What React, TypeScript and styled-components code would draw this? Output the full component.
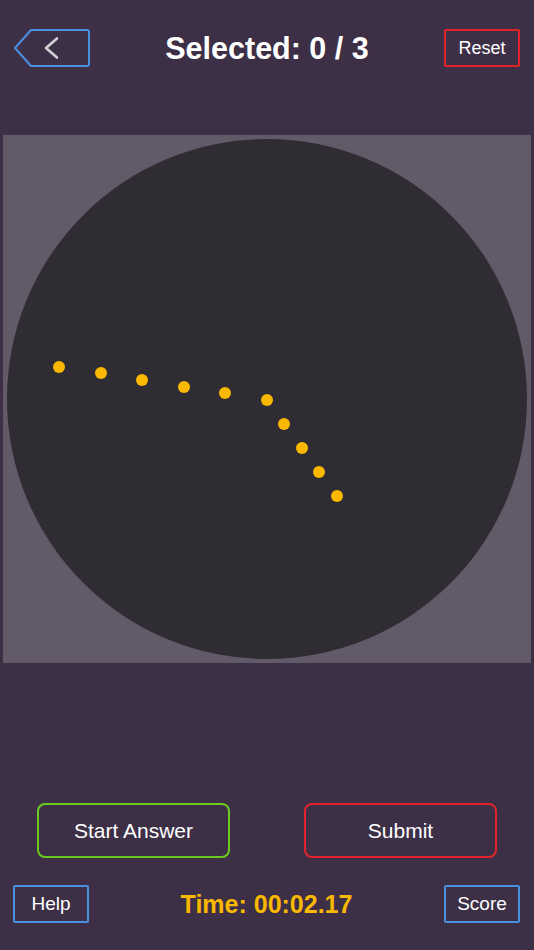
import styled, { createGlobalStyle } from "styled-components";

const GlobalStyle = createGlobalStyle`
  html, body {
    margin: 0;
    padding: 0;
    background: #3d3046;
  }
  body {
    font-family: "Liberation Sans", Arial, sans-serif;
    overflow: hidden;
  }
  * {
    box-sizing: border-box;
  }
`;

type Dot = { x: number; y: number };

// centres of the dots, in board coordinates
const dots: Dot[] = [
  { x: 56, y: 231.5 },
  { x: 97.7, y: 238.3 },
  { x: 139.3, y: 245 },
  { x: 180.7, y: 251.7 },
  { x: 222.3, y: 258 },
  { x: 263.7, y: 264.7 },
  { x: 281.3, y: 288.7 },
  { x: 298.7, y: 312.7 },
  { x: 316.3, y: 336.7 },
  { x: 333.7, y: 361 },
];

function BackIcon() {
  return (
    <svg width="76" height="38" viewBox="0 0 76 38" fill="none">
      <path
        d="M17 1 H73 Q75 1 75 3 V35 Q75 37 73 37 H17 L1 19 Z"
        stroke="#4a90e2"
        strokeWidth="2"
        strokeLinejoin="round"
      />
      <path
        d="M43 9.5 L32 19 L43 28.5"
        stroke="#d2d2d2"
        strokeWidth="2.6"
        strokeLinecap="round"
        strokeLinejoin="round"
      />
    </svg>
  );
}

export default function App() {
  return (
    <>
      <GlobalStyle />
      <Page>
        <Header>
          <BackButton aria-label="Back">
            <BackIcon />
          </BackButton>
          <Title>Selected: 0 / 3</Title>
          <SmallButton color="#e0242a" fontSize={18}>
            Reset
          </SmallButton>
        </Header>

        <Board>
          <Disc />
          {dots.map((d, i) => (
            <Marker key={i} style={{ left: d.x - 6, top: d.y - 6 }} />
          ))}
        </Board>

        <Actions>
          <BigButton color="#6acb1e">Start Answer</BigButton>
          <BigButton color="#e0242a">Submit</BigButton>
        </Actions>

        <Footer>
          <SmallButton color="#4a90e2" fontSize={19}>
            Help
          </SmallButton>
          <Timer>Time: 00:02.17</Timer>
          <SmallButton color="#4a90e2" fontSize={19}>
            Score
          </SmallButton>
        </Footer>
      </Page>
    </>
  );
}

const Page = styled.div`
  display: flex;
  flex-direction: column;
  width: 534px;
  height: 950px;
  padding: 29px 0 27px;
  background: #3d3046;
`;

const Header = styled.div`
  display: grid;
  grid-template-columns: 76px 1fr 76px;
  align-items: center;
  height: 38px;
  padding: 0 14px;
`;

const BackButton = styled.button`
  display: flex;
  width: 76px;
  height: 38px;
  padding: 0;
  border: none;
  background: transparent;
  cursor: pointer;
`;

const Title = styled.h1`
  margin: 0;
  text-align: center;
  color: #ffffff;
  font-size: 30.5px;
  font-weight: 700;
`;

const SmallButton = styled.button<{ color: string; fontSize: number }>`
  width: 76px;
  height: 38px;
  padding: 0;
  border: 2px solid ${({ color }) => color};
  border-radius: 2px;
  background: transparent;
  color: #ffffff;
  font-family: inherit;
  font-size: ${({ fontSize }) => fontSize}px;
  cursor: pointer;
`;

const Board = styled.div`
  position: relative;
  width: 528px;
  height: 528px;
  margin: 68px 3px 0;
  background: #625a69;
`;

const Disc = styled.div`
  position: absolute;
  left: 4px;
  top: 4px;
  width: 520px;
  height: 520px;
  border-radius: 50%;
  background: #2f2c33;
`;

const Marker = styled.div`
  position: absolute;
  width: 12px;
  height: 12px;
  border-radius: 50%;
  background: #fbb800;
`;

const Actions = styled.div`
  display: flex;
  justify-content: space-between;
  margin-top: auto;
  padding: 0 37px;
`;

const BigButton = styled.button<{ color: string }>`
  width: 193px;
  height: 55px;
  border: 2px solid ${({ color }) => color};
  border-radius: 8px;
  background: transparent;
  color: #ffffff;
  font-family: inherit;
  font-size: 21px;
  cursor: pointer;
`;

const Footer = styled.div`
  display: grid;
  grid-template-columns: 76px 1fr 76px;
  align-items: center;
  height: 38px;
  margin-top: 27px;
  padding: 0 14px 0 13px;
`;

const Timer = styled.div`
  text-align: center;
  color: #fbb800;
  font-size: 25px;
  font-weight: 700;
`;
